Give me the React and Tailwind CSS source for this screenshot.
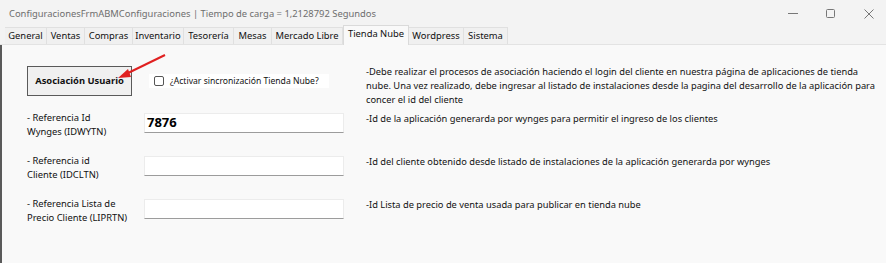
import React from "react";

const tabs = [
  ["General", "w-[42px]"],
  ["Ventas", "w-[38px]"],
  ["Compras", "w-[48px]"],
  ["Inventario", "w-[51px]"],
  ["Tesorería", "w-[50px]"],
  ["Mesas", "w-[38px]"],
  ["Mercado Libre", "w-[71px]"],
  ["Tienda Nube", "w-[66px]"],
  ["Wordpress", "w-[55px]"],
  ["Sistema", "w-[44px]"],
];

function Row({ label1, label2, value, desc }) {
  return (
    <div className="flex h-[43px] items-start">
      <div className="w-[117px] shrink-0 text-[9.4px] leading-[14px] text-[#111] whitespace-nowrap">
        <div>{label1}</div>
        <div>{label2}</div>
      </div>
      <div className="mt-[2px] flex h-[20px] w-[200px] shrink-0 items-center border border-[#ececec] border-b-[#9c9c9c] bg-white px-[2px] text-[13px] font-bold text-black">
        {value}
      </div>
      <div className="ml-[22px] pt-[1px] text-[9.3px] leading-[14px] text-[#111] whitespace-nowrap">{desc}</div>
    </div>
  );
}

export default function App() {
  return (
    <div className="flex h-[263px] w-[886px] flex-col overflow-hidden bg-[#f3f3f3]" style={{ fontFamily: '"Noto Sans", "Open Sans", sans-serif' }}>
      <div className="flex h-[28px] shrink-0 items-center justify-between pl-[9px]">
        <span className="text-[9.4px] text-[#6e6e6e] whitespace-nowrap">ConfiguracionesFrmABMConfiguraciones | Tiempo de carga = 1,2128792 Segundos</span>
        <div className="flex h-full items-center">
          <svg width="38" height="28" viewBox="0 0 38 28"><line x1="16" y1="13.5" x2="26" y2="13.5" stroke="#777" strokeWidth="1" /></svg>
          <svg width="38" height="28" viewBox="0 0 38 28"><rect x="16.5" y="9.5" width="8" height="8" rx="1" fill="none" stroke="#777" strokeWidth="1" /></svg>
          <svg width="38" height="28" viewBox="0 0 38 28"><path d="M16.5 9.5 L25.5 18.5 M25.5 9.5 L16.5 18.5" stroke="#777" strokeWidth="1" /></svg>
        </div>
      </div>
      <div className="flex h-[17px] shrink-0 items-end border-b border-[#e3e3e3] pl-[5px]">
        {tabs.map(([t, w]) => (
          t === "Tienda Nube" ? (
            <div key={t} className={`relative -mb-px flex h-[20px] shrink-0 items-center justify-center border border-b-0 border-[#dadada] bg-[#f9f9f9] pb-[3px] text-[9.4px] text-[#111] whitespace-nowrap ${w}`}>{t}</div>
          ) : (
            <div key={t} className={`flex h-[17px] shrink-0 items-center justify-center border border-b-0 border-l-0 border-[#e0e0e0] bg-[#f0f0f0] text-[9.4px] text-[#111] whitespace-nowrap ${w}`}>{t}</div>
          )
        ))}
      </div>
      <div className="relative flex-1 border-l-2 border-[#5a5a5a] bg-[#f9f9f9] pl-[25px] pt-[20px]">
        <div className="flex h-[46px] items-start">
          <div className="flex w-[317px] shrink-0 items-start">
            <button className="mt-[1px] h-[30px] w-[105px] shrink-0 border border-[#5a5a5a] bg-[#f0f0f0] text-[9.4px] font-bold text-[#111]">Asociación Usuario</button>
            <div className="ml-[17px] mt-[9px] flex h-[14px] w-[180px] shrink-0 items-center bg-white pl-[5px]">
              <div className="h-[10px] w-[10px] shrink-0 rounded-[2px] border border-[#555] bg-white" />
              <span className="ml-[6px] text-[8.6px] text-[#111] whitespace-nowrap">¿Activar sincronización Tienda Nube?</span>
            </div>
          </div>
          <div className="ml-[22px] text-[9.3px] leading-[14px] text-[#111] whitespace-nowrap">
            -Debe realizar el procesos de asociación haciendo el login del cliente en nuestra página de aplicaciones de tienda<br />
            nube. Una vez realizado, debe ingresar al listado de instalaciones desde la pagina del desarrollo de la aplicación para<br />
            concer el id del cliente
          </div>
        </div>
        <Row label1="- Referencia Id" label2="Wynges (IDWYTN)" value="7876" desc="-Id de la aplicación generarda por wynges para permitir el ingreso de los clientes" />
        <Row label1="- Referencia id" label2="Cliente (IDCLTN)" value="" desc="-Id del cliente obtenido desde listado de instalaciones de la aplicación generarda por wynges" />
        <Row label1="- Referencia Lista de" label2="Precio Cliente (LIPRTN)" value="" desc="-Id Lista de precio de venta usada para publicar en tienda nube" />
        <svg className="absolute left-0 top-0" width="200" height="60" style={{ overflow: "visible" }}>
          <line x1="163" y1="10" x2="124" y2="29" stroke="#e02020" strokeWidth="2" />
          <polygon points="116,33 126,24 129,32" fill="#e02020" />
        </svg>
      </div>
    </div>
  );
}
